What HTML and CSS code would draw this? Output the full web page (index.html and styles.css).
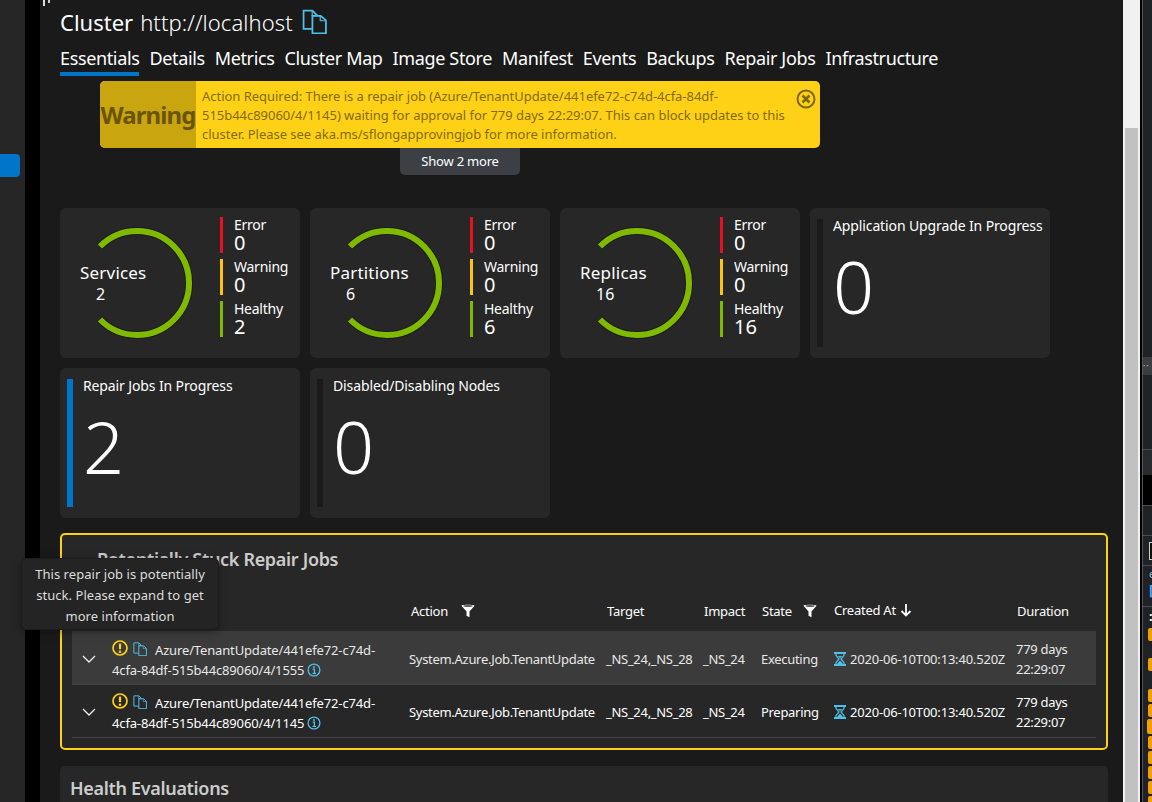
FILE: index.html
```html
<!DOCTYPE html>
<html lang="en">
<head>
<meta charset="utf-8">
<title>Cluster http://localhost</title>
<link rel="stylesheet" href="styles.css">
</head>
<body>
<svg class="defs" width="0" height="0" aria-hidden="true">
  <symbol id="copy" viewBox="0 0 24 24"><path d="M9.500 19H1.500V1.500H10L14.500 6V6.500" fill="none" stroke="currentColor" stroke-width="1.700"/><path d="M9.800 2V6.300H14" fill="none" stroke="currentColor" stroke-width="1.100"/><path d="M10 6.500H18L23 11V23.500H10Z" fill="none" stroke="currentColor" stroke-width="1.700"/><path d="M17.500 7V11.300H23" fill="none" stroke="currentColor" stroke-width="1.100"/></symbol>
  <symbol id="warn" viewBox="0 0 16 16"><circle cx="8" cy="8" r="7" fill="none" stroke="#fcd116" stroke-width="1.700"/><path d="M8 3.600V9.200" stroke="#fcd116" stroke-width="2.200"/><circle cx="8" cy="11.700" r="1.300" fill="#fcd116"/></symbol>
  <symbol id="info" viewBox="0 0 14 14"><circle cx="7" cy="7" r="5.900" fill="none" stroke="#50c0e8" stroke-width="1.300"/><path d="M5.600 6.200H7.400V10M5.500 10.300H9" fill="none" stroke="#50c0e8" stroke-width="1.200"/><circle cx="7" cy="3.900" r="1" fill="#50c0e8"/></symbol>
  <symbol id="hourglass" viewBox="0 0 12 14"><path d="M0 1H12M0 13H12" stroke="#50c0e8" stroke-width="1.800"/><path d="M2 1.500V3.500L5 7L2 10.500V12.500H10V10.500L7 7L10 3.500V1.500Z" fill="none" stroke="#50c0e8" stroke-width="1.200"/><path d="M3 12L6 8.500L9 12Z" fill="#50c0e8"/><path d="M4 4H8L6 6.300Z" fill="#50c0e8"/></symbol>
  <symbol id="funnel" viewBox="0 0 14 14"><path d="M0.500 1.800C0.500 0.500 13.500 0.500 13.500 1.800L8.500 7.500V13.200L5.500 11.800V7.500Z" fill="#fff"/><ellipse cx="7" cy="2" rx="4.800" ry="0.800" fill="#272727"/></symbol>
  <symbol id="chev" viewBox="0 0 14 8"><path d="M1 1L7 7L13 1" fill="none" stroke="#eee" stroke-width="1.300"/></symbol>
  <symbol id="ring" viewBox="0 0 114 114"><path d="M20 20.500A52 52 0 1 1 20 93.500" fill="none" stroke="#1b1b1b" stroke-width="8"/><path d="M20 20.500A52 52 0 1 1 20 93.500" fill="none" stroke="#7fba00" stroke-width="6"/></symbol>
</svg>

<div class="window">
  <nav class="rail"><div class="rail-item"></div></nav>
  <div class="rail-gap"></div>

  <main class="main">
    <span class="stray"></span>
    <h1 class="title"><span class="title-strong">Cluster</span> <span class="title-light">http://localhost</span>
      <svg class="title-copy"><use href="#copy"/></svg>
    </h1>
    <div class="tabs">
      <a class="tab active">Essentials</a>
      <a class="tab">Details</a>
      <a class="tab">Metrics</a>
      <a class="tab">Cluster Map</a>
      <a class="tab">Image Store</a>
      <a class="tab">Manifest</a>
      <a class="tab">Events</a>
      <a class="tab">Backups</a>
      <a class="tab">Repair Jobs</a>
      <a class="tab">Infrastructure</a>
    </div>

    <section class="banner-area">
      <div class="alert">
        <div class="alert-label">Warning</div>
        <p class="alert-text">Action Required: There is a repair job (Azure/TenantUpdate/441efe72-c74d-4cfa-84df-515b44c89060/4/1145) waiting for approval for 779 days 22:29:07. This can block updates to this cluster. Please see aka.ms/sflongapprovingjob for more information.</p>
        <svg class="alert-close" viewBox="0 0 20 20"><circle cx="10" cy="10" r="8.500" fill="none" stroke="#7d6508" stroke-width="2"/><path d="M6.500 6.500L13.500 13.500M13.500 6.500L6.500 13.500" stroke="#7d6508" stroke-width="2.600"/></svg>
      </div>
      <button class="more">Show 2 more</button>
    </section>

    <section class="cards">
      <article class="card">
        <div class="ring-wrap">
          <svg class="ring"><use href="#ring"/></svg>
          <div class="ring-label">Services<span class="ring-count">2</span></div>
        </div>
        <ul class="legend">
          <li class="legend-item err"><span class="legend-name">Error</span><span class="legend-num">0</span></li>
          <li class="legend-item warnc"><span class="legend-name">Warning</span><span class="legend-num">0</span></li>
          <li class="legend-item ok"><span class="legend-name">Healthy</span><span class="legend-num">2</span></li>
        </ul>
      </article>
      <article class="card">
        <div class="ring-wrap">
          <svg class="ring"><use href="#ring"/></svg>
          <div class="ring-label">Partitions<span class="ring-count">6</span></div>
        </div>
        <ul class="legend">
          <li class="legend-item err"><span class="legend-name">Error</span><span class="legend-num">0</span></li>
          <li class="legend-item warnc"><span class="legend-name">Warning</span><span class="legend-num">0</span></li>
          <li class="legend-item ok"><span class="legend-name">Healthy</span><span class="legend-num">6</span></li>
        </ul>
      </article>
      <article class="card">
        <div class="ring-wrap">
          <svg class="ring"><use href="#ring"/></svg>
          <div class="ring-label">Replicas<span class="ring-count">16</span></div>
        </div>
        <ul class="legend">
          <li class="legend-item err"><span class="legend-name">Error</span><span class="legend-num">0</span></li>
          <li class="legend-item warnc"><span class="legend-name">Warning</span><span class="legend-num">0</span></li>
          <li class="legend-item ok"><span class="legend-name">Healthy</span><span class="legend-num">16</span></li>
        </ul>
      </article>
      <article class="card stat">
        <div class="stat-bar"></div>
        <div class="stat-body"><div class="stat-title">Application Upgrade In Progress</div><div class="stat-num">0</div></div>
      </article>
      <article class="card stat">
        <div class="stat-bar blue"></div>
        <div class="stat-body"><div class="stat-title">Repair Jobs In Progress</div><div class="stat-num">2</div></div>
      </article>
      <article class="card stat">
        <div class="stat-bar"></div>
        <div class="stat-body"><div class="stat-title">Disabled/Disabling Nodes</div><div class="stat-num">0</div></div>
      </article>
    </section>

    <section class="stuck">
      <h2 class="section-title"><svg class="section-chev"><use href="#chev"/></svg>Potentially Stuck Repair Jobs</h2>
      <table class="jobs">
        <colgroup><col class="c-exp"><col class="c-id"><col class="c-act"><col class="c-tgt"><col class="c-imp"><col class="c-st"><col class="c-cr"><col class="c-dur"></colgroup>
        <thead>
          <tr>
            <th></th><th></th>
            <th class="h-act">Action<svg class="filter"><use href="#funnel"/></svg></th>
            <th>Target</th><th>Impact</th>
            <th>State<svg class="filter near"><use href="#funnel"/></svg></th>
            <th class="h-cr">Created At<svg class="arrow" viewBox="0 0 12 14"><path d="M6 1V12.500M1.500 8L6 12.500L10.500 8" fill="none" stroke="#fff" stroke-width="1.800"/></svg></th>
            <th>Duration</th>
          </tr>
        </thead>
        <tbody>
          <tr class="hl">
            <td class="exp"><svg class="chev"><use href="#chev"/></svg></td>
            <td class="id"><svg class="warn-ic"><use href="#warn"/></svg><svg class="copy-ic"><use href="#copy"/></svg><span class="id-first">Azure/TenantUpdate/441efe72-c74d-4cfa-84df-515b44c89060/4/1555</span><svg class="info-ic"><use href="#info"/></svg></td>
            <td>System.Azure.Job.TenantUpdate</td><td>_NS_24,_NS_28</td><td>_NS_24</td><td>Executing</td>
            <td class="created"><svg class="glass"><use href="#hourglass"/></svg>2020-06-10T00:13:40.520Z</td>
            <td>779 days 22:29:07</td>
          </tr>
          <tr>
            <td class="exp"><svg class="chev"><use href="#chev"/></svg></td>
            <td class="id"><svg class="warn-ic"><use href="#warn"/></svg><svg class="copy-ic"><use href="#copy"/></svg><span class="id-first">Azure/TenantUpdate/441efe72-c74d-4cfa-84df-515b44c89060/4/1145</span><svg class="info-ic"><use href="#info"/></svg></td>
            <td>System.Azure.Job.TenantUpdate</td><td>_NS_24,_NS_28</td><td>_NS_24</td><td>Preparing</td>
            <td class="created"><svg class="glass"><use href="#hourglass"/></svg>2020-06-10T00:13:40.520Z</td>
            <td>779 days 22:29:07</td>
          </tr>
        </tbody>
      </table>
    </section>

    <section class="health"><h2 class="section-title plain">Health Evaluations</h2></section>
  </main>

  <div class="scrollbar"><div class="thumb"></div></div>

  <aside class="side">
    <div class="side-a"></div>
    <div class="side-dots">••</div>
    <div class="side-b"></div>
    <div class="side-c"></div>
    <div class="side-black"></div>
    <div class="side-d"></div>
    <div class="side-e"><span class="side-box"></span></div>
    <div class="side-f"><span class="side-e-txt">e</span><span class="side-blue">[</span></div>
    <div class="side-g">
      <span class="side-colon">:</span>
      <span class="badge first"></span><span class="badge wide"></span>
      <span class="badge"></span><span class="badge"></span><span class="badge shift"></span><span class="badge"></span><span class="badge"></span><span class="badge"></span><span class="badge"></span><span class="badge"></span>
    </div>
  </aside>

  <div class="tooltip">This repair job is potentially stuck. Please expand to get more information</div>
</div>
</body>
</html>
```
FILE: styles.css
```css
* { box-sizing: border-box; }
html, body { margin: 0; padding: 0; height: 100%; overflow: hidden; background: #000; }
body { font-family: "Noto Sans", "Liberation Sans", sans-serif; color: #fff; font-size: 13px; }
.defs { position: absolute; }
.window { position: relative; display: flex; width: 1152px; height: 802px; overflow: hidden; }

.rail { width: 25px; background: #262626; padding-top: 154px; flex: none; }
.rail-item { width: 20px; height: 23px; background: #0075c9; border-radius: 0 4px 4px 0; }
.rail-gap { width: 15px; background: #000; flex: none; }

.main { position: relative; width: 1083px; flex: none; background: #1a1a1a; padding: 0 0 0 20px; overflow: hidden; }
.stray { position: absolute; left: 3px; top: 0; width: 2px; height: 6px; background: #ddd; box-shadow: 5px -3px 0 #ccc; }
.title { margin: 0; height: 44px; display: flex; align-items: center; font-size: 22px; font-weight: 400; line-height: 30px; }
.title-strong { margin-right: 7px; }
.title-light { font-weight: 300; letter-spacing: 0.08px; }
.title-copy { width: 25px; height: 25px; margin: -2px 0 0 9px; color: #4ec0e6; }

.tabs { display: flex; gap: 10px; height: 32px; font-size: 18px; line-height: 28px; letter-spacing: -0.36px; }
.tab { display: block; height: 32px; color: #fff; }
.tab.active { border-bottom: 4px solid #0075c9; }

.banner-area { height: 127px; padding: 0 0 0 40px; display: flex; flex-direction: column; margin-top: 5px; }
.alert { position: relative; display: flex; width: 720px; height: 67px; background: #fed116; border-radius: 5px; overflow: hidden; flex: none; }
.alert-label { width: 96px; background: #c9a50f; color: #6b5400; font-size: 24px; font-weight: 700; letter-spacing: -0.9px; display: flex; align-items: center; justify-content: center; flex: none; }
.alert-text { margin: 2px 0 0; padding: 0 30px 0 6px; font-size: 13px; line-height: 19px; color: #846a0a; align-self: center; letter-spacing: -0.03px; }
.alert-close { position: absolute; right: 4px; top: 8px; width: 20px; height: 20px; }
.more { align-self: flex-start; margin-left: 300px; width: 120px; height: 27px; padding: 0 0 2px; background: #3c4045; color: #fff; font: inherit; font-size: 13px; letter-spacing: -0.2px; border: 0; border-radius: 0 0 5px 5px; }

.cards { display: grid; grid-template-columns: repeat(4, 240px); grid-auto-rows: 150px; gap: 10px; height: 310px; }
.card { display: flex; background: #272727; border-radius: 6px; position: relative; }

.ring-wrap { position: relative; width: 160px; flex: none; }
.ring { position: absolute; left: 20px; top: 18px; width: 114px; height: 114px; }
.ring-label { position: absolute; left: 20px; top: 54px; font-size: 17px; line-height: 22px; letter-spacing: 0.2px; }
.ring-count { display: block; padding-left: 16px; font-size: 16px; line-height: 20px; }
.legend { list-style: none; margin: 9px 0 0; padding: 0; display: flex; flex-direction: column; gap: 6px; }
.legend-item { height: 36px; border-left: 3px solid #888; padding-left: 11px; }
.legend-item.err { border-color: #e81123; }
.legend-item.warnc { border-color: #fcc30f; }
.legend-item.ok { border-color: #7fba00; }
.legend-name { display: block; font-size: 14px; line-height: 16px; letter-spacing: -0.25px; }
.legend-num { display: block; font-size: 20px; line-height: 20px; }

.stat { padding: 11px 0 0 7px; gap: 10px; }
.stat-bar { width: 6px; height: 128px; background: #1a1a1a; flex: none; }
.stat-bar.blue { background: #0075c9; }
.stat-body { margin-top: -1px; }
.stat-title { font-size: 14px; line-height: 16px; letter-spacing: -0.12px; white-space: nowrap; }
.stat-num { font-size: 72px; font-weight: 300; line-height: 88px; margin-top: 8px; }

.stuck { width: 1048px; height: 217px; margin-top: 15px; background: #272727; border: 2px solid #fcd116; border-radius: 5px; padding: 0 10px; }
.section-title { margin: 0; font-size: 18px; font-weight: 600; line-height: 24px; color: #ccc; letter-spacing: -0.32px; }
.stuck .section-title { padding: 12px 0 0 25px; position: relative; height: 55px; }
.section-chev { position: absolute; left: 7px; top: 24px; width: 10px; height: 6px; }
.plain { padding: 10px 0 0 10px; }

.jobs { table-layout: fixed; width: 1024px; border-collapse: collapse; font-size: 13px; }
.c-exp { width: 40px; } .c-id { width: 297px; } .c-act { width: 197px; } .c-tgt { width: 97px; }
.c-imp { width: 58px; } .c-st { width: 73px; } .c-cr { width: 182px; } .c-dur { width: 80px; }
.jobs th { height: 41px; font-weight: 400; text-align: left; padding: 0 0 0 1px; white-space: nowrap; letter-spacing: -0.25px; }
.jobs td { height: 53px; padding: 3px 0 0; line-height: 20px; border-bottom: 1px solid #444; letter-spacing: -0.3px; }
.jobs tr.hl td { background: #3b3b3b; color: #e8e8e8; }
.jobs td.exp { padding-left: 10px; }
.jobs td.id { padding: 5px 24px 0 0; letter-spacing: -0.15px; }
.jobs td.created { letter-spacing: -0.2px; }
.jobs th.h-act { padding-left: 2px; }
.jobs th.h-cr { padding-left: 0; padding-bottom: 1px; }
.filter { width: 14px; height: 14px; margin-left: 13px; vertical-align: -2px; }
.filter.near { margin-left: 11px; }
.arrow { width: 12px; height: 14px; margin-left: 4px; vertical-align: -2px; }
.chev { width: 14px; height: 8px; display: block; }
.warn-ic { width: 16px; height: 16px; vertical-align: -1px; margin-right: 5px; }
.copy-ic { width: 14px; height: 14px; vertical-align: -1px; color: #4ec0e6; margin-right: 8px; }
.info-ic { width: 14px; height: 14px; margin-left: 3px; vertical-align: -2px; }
.glass { width: 12px; height: 14px; vertical-align: -2px; margin-right: 4px; }

.health { width: 1048px; height: 60px; margin-top: 16px; background: #272727; border-radius: 5px; }

.tooltip { position: absolute; left: 21px; top: 558px; width: 198px; height: 72px; padding: 5px 10px; background: #242424; border: 1px solid #1c1c1c; border-radius: 5px; box-shadow: 0 2px 8px rgba(0,0,0,.35); color: #ddd; font-size: 13px; line-height: 21px; text-align: center; letter-spacing: 0.05px; }

.scrollbar { width: 17px; flex: none; background: #f1f1f1; padding: 128px 2px 0; }
.thumb { height: 100%; background: #c1c1c1; }

.side { width: 12px; flex: none; background: #202124; border-left: 2px solid #000; box-shadow: inset 1px 0 0 #55575b; overflow: hidden; display: flex; flex-direction: column; padding-left: 1px; }
.side-a { height: 357px; flex: none; }
.side-dots { height: 18px; flex: none; background: #3c3d40; color: #aaa; font-size: 6px; line-height: 18px; letter-spacing: 1px; }
.side-b { height: 74px; flex: none; }
.side-c { height: 26px; flex: none; background: #292a2d; border-top: 1px solid #4a4c50; }
.side-black { height: 30px; flex: none; background: #000; }
.side-d { height: 30px; flex: none; border-top: 1px solid #4a4c50; }
.side-e { height: 30px; flex: none; border-top: 1px solid #4a4c50; padding: 6px 0 0 6px; }
.side-box { display: block; width: 20px; height: 18px; border: 1px solid #ccc; background: #111; }
.side-f { height: 41px; flex: none; border-top: 1px solid #4a4c50; padding-left: 6px; display: flex; flex-direction: column; line-height: 14px; font-size: 11px; }
.side-e-txt { color: #8ab4c8; margin-top: 1px; }
.side-blue { color: #4aa8ff; font-size: 14px; font-weight: 700; margin-top: 2px; }
.side-g { border-top: 1px solid #4a4c50; padding-left: 5px; display: flex; flex-direction: column; }
.side-colon { color: #fff; font-size: 13px; line-height: 18px; font-weight: 700; padding-left: 1px; }
.badge { display: block; width: 12px; height: 13px; margin-top: 2px; background: #f29f00; border-radius: 2px; flex: none; }
.badge.first { margin-top: 3px; }
.badge.wide { margin-top: 17px; margin-bottom: 16px; }
.badge.shift { margin-left: -1px; height: 15px; }
```
